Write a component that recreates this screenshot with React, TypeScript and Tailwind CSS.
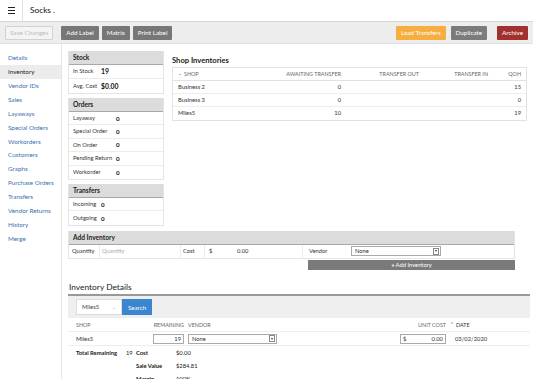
import React from "react";

const navItems = [
  "Details",
  "Inventory",
  "Vendor IDs",
  "Sales",
  "Layaways",
  "Special Orders",
  "Workorders",
  "Customers",
  "Graphs",
  "Purchase Orders",
  "Transfers",
  "Vendor Returns",
  "History",
  "Merge",
];

function PanelHeader({ children }: { children: React.ReactNode }) {
  return (
    <div className="h-[14px] bg-[#dcdcdc] border-b border-[#a8a8a8] flex items-center px-[4px] font-bold text-[6.6px] text-[#222] whitespace-nowrap">
      {children}
    </div>
  );
}

function KV({ k, v, w, big, h = "h-[13.4px]" }: { k: string; v: string; w: string; big?: boolean; h?: string }) {
  return (
    <div className={`${h} flex items-center px-[4px] border-b border-[#ececec] last:border-b-0 text-[5.8px] text-[#333] whitespace-nowrap`}>
      <span className={`${w} shrink-0`}>{k}</span>
      <span className={`font-bold text-[#111] ${big ? "text-[6.8px]" : "text-[6.2px]"}`}>{v}</span>
    </div>
  );
}

function SelectBox({ label, className }: { label: string; className: string }) {
  return (
    <div className={`h-[10px] border border-[#aaa] bg-white flex items-center justify-between pl-[3px] pr-[1px] text-[5.8px] text-[#333] ${className}`}>
      <span>{label}</span>
      <span className="w-[6px] h-[7px] border border-[#888] flex items-center justify-center text-[4px] leading-none">▾</span>
    </div>
  );
}

export default function App() {
  return (
    <div className="w-[533px] h-[379px] overflow-hidden bg-white" style={{ fontFamily: "Lato, 'Noto Sans', sans-serif" }}>
      {/* header */}
      <div className="h-[22px] flex items-center border-b border-[#d6d6d6]">
        <div className="w-[23px] h-full border-r border-[#e2e2e2] flex items-center justify-center">
          <div className="flex flex-col gap-[1.5px]">
            <div className="w-[7px] h-[1.2px] bg-[#222]" />
            <div className="w-[7px] h-[1.2px] bg-[#222]" />
            <div className="w-[7px] h-[1.2px] bg-[#222]" />
          </div>
        </div>
        <div className="pl-[7px] text-[8.3px] text-[#111]">Socks .</div>
      </div>
      {/* toolbar */}
      <div className="h-[22px] bg-[#ededed] border-b border-[#dedede] flex items-center px-[5px] text-[6.3px]">
        <div className="h-[14px] px-[4px] flex items-center border border-[#d2d2d2] bg-[#f4f4f4] text-[#bdbdbd] rounded-[1px]">Save Changes</div>
        <div className="ml-[8px] h-[14px] px-[5px] flex items-center bg-[#777] text-white rounded-[1px]">Add Label</div>
        <div className="ml-[3px] h-[14px] px-[5px] flex items-center bg-[#777] text-white rounded-[1px]">Matrix</div>
        <div className="ml-[3px] h-[14px] px-[5px] flex items-center bg-[#777] text-white rounded-[1px]">Print Label</div>
        <div className="flex-1" />
        <div className="h-[14px] px-[5px] flex items-center bg-[#f6ae40] text-white rounded-[1px]">Load Transfers</div>
        <div className="ml-[5px] h-[14px] px-[5px] flex items-center bg-[#7b7b7b] text-white rounded-[1px]">Duplicate</div>
        <div className="ml-[10px] h-[14px] px-[5px] flex items-center bg-[#a2302f] text-white rounded-[1px]">Archive</div>
      </div>
      {/* body */}
      <div className="flex">
        <div className="w-[62px] h-[335px] border-r border-[#e6e6e6] pt-[7px] flex flex-col shrink-0">
          {navItems.map((n) => (
            <div
              key={n}
              className={`h-[13.9px] flex items-center pl-[8px] text-[6.3px] whitespace-nowrap ${n === "Inventory" ? "bg-[#ececec] text-[#222]" : "text-[#3c6fb0]"}`}
            >
              {n}
            </div>
          ))}
        </div>
        <div className="flex-1 pl-[6px] pt-[7px] text-[#333]">
          <div className="flex">
            <div className="w-[96px] flex flex-col gap-[4px] shrink-0">
              <div className="border-x border-b border-[#e4e4e4]">
                <PanelHeader>Stock</PanelHeader>
                <KV k="In Stock" v="19" w="w-[28px]" big h="h-[14px]" />
                <KV k="Avg. Cost" v="$0.00" w="w-[28px]" big h="h-[14px]" />
              </div>
              <div className="border-x border-b border-[#e4e4e4]">
                <PanelHeader>Orders</PanelHeader>
                <KV k="Layaway" v="0" w="w-[43px]" />
                <KV k="Special Order" v="0" w="w-[43px]" />
                <KV k="On Order" v="0" w="w-[43px]" />
                <KV k="Pending Return" v="0" w="w-[43px]" />
                <KV k="Workorder" v="0" w="w-[43px]" />
              </div>
              <div className="border-x border-b border-[#e4e4e4]">
                <PanelHeader>Transfers</PanelHeader>
                <KV k="Incoming" v="0" w="w-[28px]" h="h-[13.5px]" />
                <KV k="Outgoing" v="0" w="w-[28px]" h="h-[13.5px]" />
              </div>
            </div>
            <div className="ml-[8px] w-[355px]">
              <div className="h-[16px] flex items-end pb-[1px] font-bold text-[7.6px] text-[#222]">Shop Inventories</div>
              <div className="border border-[#e2e2e2] text-[5.8px]">
                <div className="h-[13px] flex items-center px-[5px] border-b border-[#e2e2e2] text-[#666] text-[5.4px] whitespace-nowrap">
                  <span className="w-[60px] flex items-center gap-[2px]">
                    <span className="text-[#c33] text-[5px]">⌄</span>SHOP
                  </span>
                  <span className="w-[103px] text-right">AWAITING TRANSFER</span>
                  <span className="w-[78px] text-right">TRANSFER OUT</span>
                  <span className="w-[69px] text-right">TRANSFER IN</span>
                  <span className="flex-1 text-right">QOH</span>
                </div>
                {[
                  ["Business 2", "0", "15"],
                  ["Business 3", "0", "0"],
                  ["Miles5", "10", "19"],
                ].map(([s, a, q]) => (
                  <div key={s} className="h-[13px] flex items-center px-[5px] border-b border-[#eeeeee] last:border-b-0 text-[#333]">
                    <span className="w-[60px]">{s}</span>
                    <span className="w-[103px] text-right">{a}</span>
                    <span className="w-[78px]" />
                    <span className="w-[69px]" />
                    <span className="flex-1 text-right">{q}</span>
                  </div>
                ))}
              </div>
            </div>
          </div>

          {/* add inventory */}
          <div className="mt-[5px] w-[447px]">
            <div className="border-x border-[#e4e4e4]">
              <PanelHeader>Add Inventory</PanelHeader>
            </div>
            <div className="h-[14px] flex items-center border border-t-0 border-[#e4e4e4] text-[5.8px] whitespace-nowrap">
              <span className="w-[31px] pl-[3px] h-full flex items-center border-r border-[#ececec]">Quantity</span>
              <span className="w-[81px] pl-[2px] h-full flex items-center text-[#aaa] border-r border-[#ececec]">Quantity</span>
              <span className="w-[24px] pl-[2px] h-full flex items-center border-r border-[#ececec]">Cost</span>
              <span className="w-[26px] pl-[4px] h-full flex items-center">$</span>
              <span className="w-[72px] pl-[6px] h-full flex items-center border-r border-[#ececec]">0.00</span>
              <span className="w-[48px] pl-[6px] h-full flex items-center">Vendor</span>
              <SelectBox label="None" className="w-[90px]" />
            </div>
            <div className="flex justify-end mt-[1px]">
              <div className="w-[207px] h-[10px] bg-[#7a7a7a] text-white text-[5.8px] flex items-center justify-center">
                <span className="font-bold mr-[1px]">+</span>Add Inventory
              </div>
            </div>
          </div>

          {/* inventory details */}
          <div className="mt-[13px] w-[462px]">
            <div className="text-[8.4px] text-[#222] pl-[1px] leading-none">Inventory Details</div>
            <div className="mt-[3px] h-[2px] bg-[#999]" />
            <div className="h-[22px] bg-[#efefef] flex items-center pl-[8px]">
              <div className="w-[46px] h-[16px] bg-white border border-[#ddd] flex items-center justify-between px-[5px] text-[5.8px] text-[#444]">
                <span>Miles5</span>
                <span className="text-[#aaa] text-[5px]">⌄</span>
              </div>
              <div className="w-[30px] h-[16px] bg-[#3b86d1] text-white text-[6.2px] flex items-center justify-center">Search</div>
            </div>
            <div className="h-[14px] flex items-center px-[8px] text-[5.4px] text-[#666] border-b border-[#eeeeee] whitespace-nowrap">
              <span className="w-[108px] text-right relative">
                <span className="absolute left-0">SHOP</span>REMAINING
              </span>
              <span className="pl-[4px] flex-1">VENDOR</span>
              <span className="mr-[4px]">UNIT COST</span>
              <span className="w-[72px] flex items-center gap-[2px]">
                <span className="text-[#c33] text-[5px]">⌃</span>
                <span className="text-[#333]">DATE</span>
              </span>
            </div>
            <div className="h-[14px] flex items-center px-[8px] text-[5.8px] text-[#333] border-b border-[#eeeeee]">
              <span className="w-[77px]">Miles5</span>
              <span className="w-[31px] h-[10px] border border-[#aaa] flex items-center justify-end pr-[2px]">19</span>
              <span className="ml-[4px]" />
              <SelectBox label="None" className="w-[89px]" />
              <span className="flex-1" />
              <span className="w-[46px] h-[10px] border border-[#aaa] flex items-center justify-between px-[2px] mr-[4px]">
                <span>$</span>
                <span>0.00</span>
              </span>
              <span className="w-[72px] pl-[5px]">03/02/2020</span>
            </div>
            <div className="flex pl-[8px] text-[5.8px] text-[#222]">
              <span className="h-[13px] flex items-center font-bold w-[50px] whitespace-nowrap">Total Remaining</span>
              <span className="h-[13px] flex items-center w-[10px]">19</span>
              <div className="flex flex-col">
                {[
                  ["Cost", "$0.00"],
                  ["Sale Value", "$284.81"],
                  ["Margin", "100%"],
                ].map(([k, v]) => (
                  <div key={k} className="h-[13px] flex items-center whitespace-nowrap">
                    <span className="font-bold w-[40px]">{k}</span>
                    <span>{v}</span>
                  </div>
                ))}
              </div>
            </div>
          </div>
        </div>
      </div>
    </div>
  );
}
